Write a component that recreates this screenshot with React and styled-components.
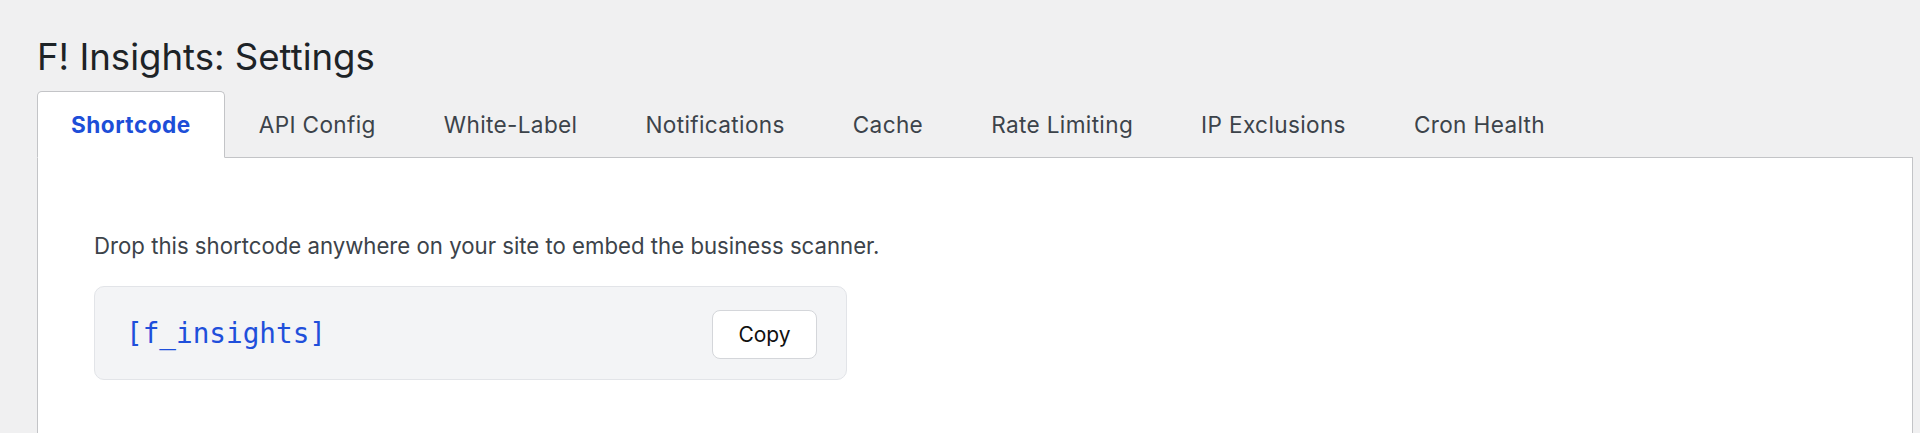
import styled, { createGlobalStyle } from 'styled-components'

const GlobalStyle = createGlobalStyle`
  html, body {
    margin: 0;
    padding: 0;
    background: #f0f0f1;
    font-family: Inter, "Liberation Sans", sans-serif;
  }
`

const Wrap = styled.div`
  padding: 0 7px 0 37px;
  min-height: 433px;
  box-sizing: border-box;
`

const Title = styled.h1`
  margin: 0;
  padding-top: 35px;
  font-size: 36.6px;
  line-height: 44px;
  font-weight: 400;
  color: #1d2327;
`

const TabRow = styled.nav`
  display: flex;
  margin-top: 12px;
`

const Tab = styled.div`
  box-sizing: border-box;
  height: 67px;
  margin-bottom: -1px;
  padding: 0 33px;
  display: flex;
  align-items: center;
  font-size: 22.6px;
  letter-spacing: ${p => (p.active ? '0.5px' : '0.35px')};
  font-weight: ${p => (p.active ? 700 : 400)};
  color: ${p => (p.active ? '#1d4ed8' : '#3c434a')};
  background: ${p => (p.active ? '#fff' : 'transparent')};
  border: 1px solid ${p => (p.active ? '#c3c4c7' : 'transparent')};
  border-bottom-color: ${p => (p.active ? '#fff' : 'transparent')};
  border-radius: 5px 5px 0 0;
  position: relative;
  z-index: 1;
`

const Panel = styled.section`
  background: #fff;
  border: 1px solid #c3c4c7;
  border-bottom: none;
  min-height: 300px;
  padding: 73px 56px 0;
`

const Lead = styled.p`
  margin: 0 0 25px;
  font-size: 22.2px;
  line-height: 30px;
  color: #3c434a;
`

const CodeBox = styled.div`
  box-sizing: border-box;
  width: 753px;
  height: 94px;
  display: flex;
  align-items: center;
  justify-content: space-between;
  padding: 2px 29px 0 31px;
  background: #f3f4f6;
  border: 1px solid #e2e4e8;
  border-radius: 10px;
`

const Code = styled.code`
  font-family: "DejaVu Sans Mono", "Liberation Mono", monospace;
  font-size: 27.7px;
  line-height: 40px;
  color: #1f4fdb;
`

const CopyButton = styled.button`
  box-sizing: border-box;
  width: 105px;
  height: 49px;
  background: #fff;
  border: 1px solid #d4d6da;
  border-radius: 8px;
  font-family: Inter, "Liberation Sans", sans-serif;
  font-size: 21px;
  color: #111;
  cursor: pointer;
`

const tabs = [
  'Shortcode',
  'API Config',
  'White-Label',
  'Notifications',
  'Cache',
  'Rate Limiting',
  'IP Exclusions',
  'Cron Health',
]

const App = () => {
  return (
    <>
      <GlobalStyle />
      <Wrap>
        <Title>F! Insights: Settings</Title>
        <TabRow>
          {tabs.map((t, i) => (
            <Tab key={t} active={i === 0}>{t}</Tab>
          ))}
        </TabRow>
        <Panel>
          <Lead>Drop this shortcode anywhere on your site to embed the business scanner.</Lead>
          <CodeBox>
            <Code>[f_insights]</Code>
            <CopyButton>Copy</CopyButton>
          </CodeBox>
        </Panel>
      </Wrap>
    </>
  )
}

export default App
